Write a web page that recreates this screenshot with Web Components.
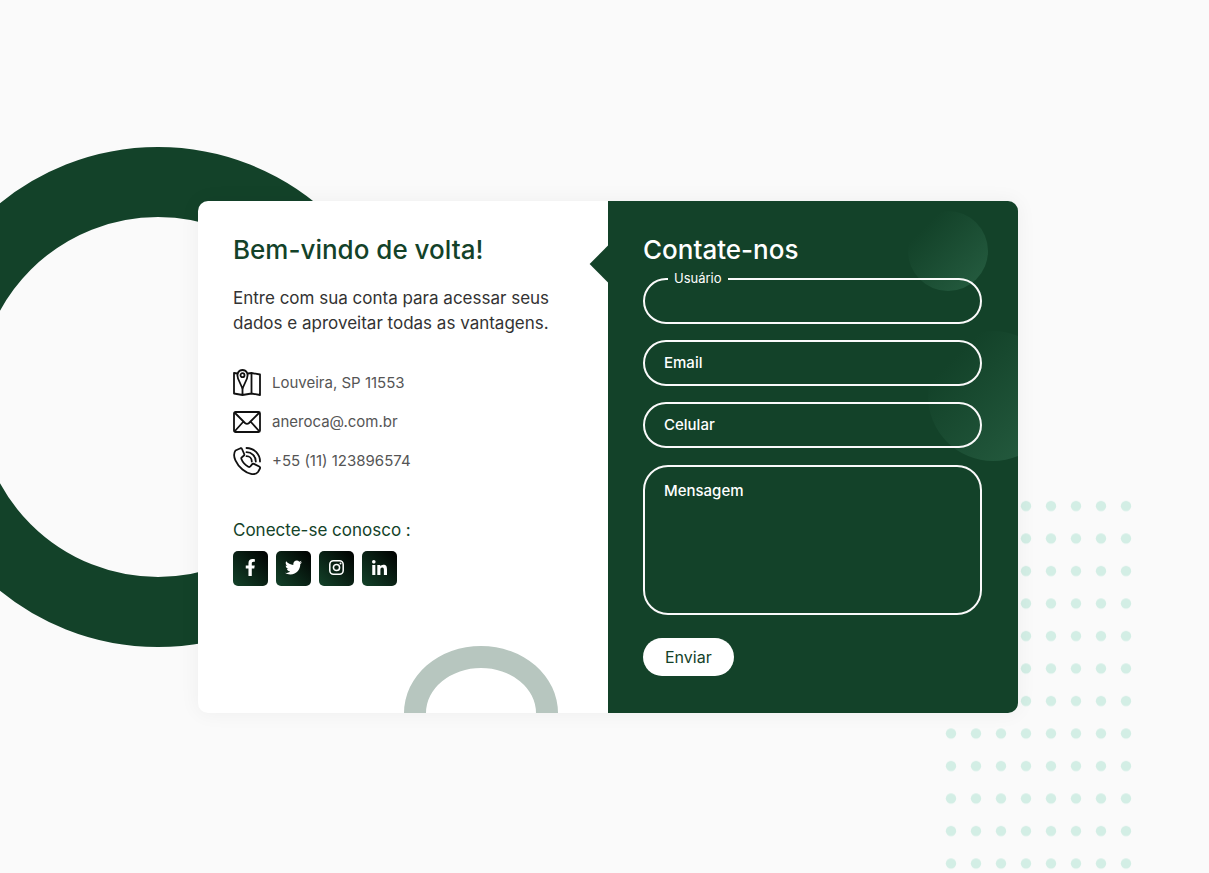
<!DOCTYPE html>
<html lang="pt-BR">
<head>
<meta charset="utf-8">
<meta name="viewport" content="width=device-width, initial-scale=1">
<title>Contate-nos</title>
<style>
  body { margin: 0; font-family: Inter, "Open Sans", sans-serif; background: #fafafa; }
</style>
</head>
<body>
<contact-page>
  <contact-info slot="info">
    <h2 slot="title">Bem-vindo de volta!</h2>
    <span slot="text">Entre com sua conta para acessar seus dados e aproveitar todas as vantagens.</span>
    <info-row icon="map">Louveira, SP 11553</info-row>
    <info-row icon="mail">aneroca@.com.br</info-row>
    <info-row icon="phone">+55 (11) 123896574</info-row>
    <span slot="social-title">Conecte-se conosco :</span>
    <social-link slot="social" icon="facebook" label="Facebook"></social-link>
    <social-link slot="social" icon="twitter" label="Twitter"></social-link>
    <social-link slot="social" icon="instagram" label="Instagram"></social-link>
    <social-link slot="social" icon="linkedin" label="LinkedIn"></social-link>
  </contact-info>
  <contact-form slot="form"></contact-form>
</contact-page>

<script>
const ICONS = {
  map: `<svg viewBox="0 0 28 28" fill="none" stroke="#111" stroke-width="1.8" stroke-linejoin="round" stroke-linecap="round">
    <path d="M4.500 4.500 1 4v20.500l8.500 1.500 9-1.500 8.500 1.500V5.500L18.500 4l-3.500.5M9.500 19.500V26M18.500 4v20.500"/>
    <path d="M9.500 19.500 5 9.500C3 5 5.700 1 9.500 1s6.500 4 4.500 8.500z"/><circle cx="9.500" cy="6.200" r="2"/></svg>`,
  mail: `<svg viewBox="0 0 28 28" fill="none" stroke="#111" stroke-width="1.800" stroke-linejoin="round">
    <rect x="1" y="4" width="26" height="20" rx="1.500"/><path d="m1.500 4.500 10.500 10.500q2 1.700 4 0L26.500 4.500M1.500 23.500l9-10M26.500 23.500l-9-10"/></svg>`,
  phone: `<svg viewBox="0 0 28 28" fill="none" stroke="#111" stroke-width="1.800" stroke-linejoin="round" stroke-linecap="round">
    <path d="M7.500 1.200 2.500 3.500C-1.500 9 4 18 9.500 22.500c5.500 4.500 12 6.500 15.500 2.500l2-3.500q.5-1.200-.8-2l-5.200-2.600q-1.200-.5-2 .5L17.300 19.500q-.8.900-2 .2C11.500 17.500 9.500 15 8.400 12q-.4-1 .5-1.700l1.800-1.500q.9-.7.500-1.800L9 2q-.5-1.100-1.500-.8z"/>
    <path d="M13.500 1C21 1 27 7 27 14.500M13.500 5.200c5.200 0 9.300 4.100 9.300 9.300M13.500 9.200c3 0 5.300 2.300 5.300 5.300"/></svg>`,
  facebook: `<svg viewBox="0 0 320 512"><path fill="#fff" d="M279.140 288l14.220-92.660h-88.910v-60.130c0-25.350 12.420-50.060 52.240-50.060h40.420V6.260S260.430 0 225.360 0c-73.220 0-121.080 44.380-121.080 124.720v70.620H22.890V288h81.390v224h100.170V288z"/></svg>`,
  twitter: `<svg viewBox="0 0 512 512"><path fill="#fff" d="M459.370 151.716c.325 4.548.325 9.097.325 13.645 0 138.720-105.583 298.558-298.558 298.558-59.452 0-114.680-17.219-161.137-47.106 8.447.974 16.568 1.299 25.340 1.299 49.055 0 94.213-16.568 130.274-44.832-46.132-.975-84.792-31.188-98.112-72.772 6.498.974 12.995 1.624 19.818 1.624 9.421 0 18.843-1.300 27.614-3.573-48.081-9.747-84.143-51.980-84.143-102.985v-1.299c13.969 7.797 30.214 12.670 47.431 13.319-28.264-18.843-46.781-51.005-46.781-87.391 0-19.492 5.197-37.360 14.294-52.954 51.655 63.675 129.300 105.258 216.365 109.807-1.624-7.797-2.599-15.918-2.599-24.040 0-57.828 46.782-104.934 104.934-104.934 30.213 0 57.502 12.670 76.670 33.137 23.715-4.548 46.456-13.320 66.599-25.340-7.798 24.366-24.366 44.833-46.132 57.827 21.117-2.273 41.584-8.122 60.426-16.243-14.292 20.791-32.161 39.308-52.628 54.253z"/></svg>`,
  instagram: `<svg viewBox="0 0 448 448"><rect x="24" y="24" width="400" height="400" rx="110" fill="none" stroke="#fff" stroke-width="46"/><circle cx="224" cy="224" r="92" fill="none" stroke="#fff" stroke-width="46"/><circle cx="344" cy="104" r="29" fill="#fff"/></svg>`,
  linkedin: `<svg viewBox="0 32 448 448"><path fill="#fff" d="M100.280 480H7.400V180.900h92.880zM53.790 140.100C24.090 140.100 0 115.500 0 85.800a53.790 53.790 0 0 1 107.580 0c0 29.700-24.100 54.300-53.790 54.300zM447.900 480h-92.680V334.400c0-34.700-.7-79.200-48.290-79.200-48.290 0-55.690 37.700-55.690 76.700V480h-92.780V180.900h89.080v40.800h1.300c12.400-23.500 42.690-48.300 87.880-48.300 94 0 111.280 61.900 111.280 142.300V480z"/></svg>`
};

class BaseElement extends HTMLElement {
  render(html) {
    const template = document.createElement('template');
    template.innerHTML = html;
    this.attachShadow({ mode: 'open' }).append(template.content.cloneNode(true));
  }
}

customElements.define('info-row', class extends BaseElement {
  connectedCallback() {
    this.render(`<style>
      :host { display: flex; align-items: center; gap: 11px; margin: 11px 0; color: #555; font-size: 15px; line-height: 28px; }
      svg { display: block; width: 28px; height: 28px; }
    </style>${ICONS[this.getAttribute('icon')]}<span><slot></slot></span>`);
  }
});

customElements.define('social-link', class extends BaseElement {
  connectedCallback() {
    const icon = this.getAttribute('icon');
    this.render(`<style>
      :host { display: block; }
      a { display: flex; align-items: center; justify-content: center; width: 35px; height: 35px; border-radius: 5px; background: linear-gradient(45deg, #134229, #000); }
      svg { display: block; height: 17px; margin-bottom: 2px; }
      .instagram, .linkedin { height: 15px; }
    </style><a href="#" aria-label="${this.getAttribute('label')}">${ICONS[icon].replace('<svg', `<svg class="${icon}"`)}</a>`);
  }
});

customElements.define('contact-info', class extends BaseElement {
  connectedCallback() {
    this.render(`<style>
      :host { display: block; box-sizing: border-box; position: relative; padding: 31px 35px; overflow: hidden; }
      ::slotted(h2) { margin: 0; color: #134229; font-size: 26px; font-weight: 500; line-height: 36px; }
      p { margin: 18px 0 33px; color: #333; font-size: 17px; line-height: 25px; }
      .social { padding-top: 28px; color: #134229; }
      .social p { margin: 0; color: inherit; line-height: 32px; }
      .links { display: flex; gap: 8px; margin-top: 5px; }
      .ring { position: absolute; box-sizing: border-box; width: 154px; height: 134px; right: 50px; bottom: -67px; border: 22px solid #b7c6bf; border-radius: 50%; }
    </style>
    <slot name="title"></slot>
    <p><slot name="text"></slot></p>
    <slot></slot>
    <div class="social"><p><slot name="social-title"></slot></p><div class="links"><slot name="social"></slot></div></div>
    <div class="ring"></div>`);
  }
});

customElements.define('contact-form', class extends BaseElement {
  connectedCallback() {
    this.render(`<style>
      :host { display: block; position: relative; background: #134229; color: #fff; }
      .art { position: absolute; inset: 0; overflow: hidden; border-radius: 0 10px 10px 0; }
      .art i { position: absolute; border-radius: 50%; background: linear-gradient(135deg, transparent 20%, #3a7a5a80); }
      .small { width: 80px; height: 80px; top: 10px; right: 30px; }
      .large { width: 130px; height: 130px; top: 130px; right: -40px; }
      .arrow { position: absolute; width: 26px; height: 26px; top: 50px; left: -13px; background: #134229; transform: rotate(45deg); }
      form { position: relative; padding: 31px 36px 37px 35px; }
      h2 { margin: 0; font-size: 26px; font-weight: 500; line-height: 36px; }
      .field { position: relative; margin: 16px 0; }
      .field.first { margin-top: 10px; }
      .field.message { margin-top: 17px; }
      input, textarea { display: block; box-sizing: border-box; width: 100%; height: 46px; padding: 10px 19px; border: 2px solid #fafafa; border-radius: 25px; outline: none; background: none; color: #fff; font: 500 15px Inter, sans-serif; resize: none; }
      textarea { height: 150px; }
      label { position: absolute; left: 21px; top: 13px; font-size: 15px; font-weight: 500; line-height: 20px; pointer-events: none; }
      .first label { left: 25px; top: -10px; padding: 0 6px; background: #134229; font-size: 13px; font-weight: 400; }
      .message label { top: 16px; }
      button { display: block; margin-top: 23px; padding: 0 22px; border: 0; border-radius: 19px; background: #fff; color: #134229; font: 16px/38px Inter, sans-serif; cursor: pointer; }
    </style>
    <div class="art"><i class="small"></i><i class="large"></i></div>
    <div class="arrow"></div>
    <form>
      <h2>Contate-nos</h2>
      <div class="field first"><input id="user" type="text"><label for="user">Usuário</label></div>
      <div class="field"><input id="email" type="email"><label for="email">Email</label></div>
      <div class="field"><input id="phone" type="tel"><label for="phone">Celular</label></div>
      <div class="field message"><textarea id="message"></textarea><label for="message">Mensagem</label></div>
      <button type="button">Enviar</button>
    </form>`);
  }
});

customElements.define('contact-page', class extends BaseElement {
  connectedCallback() {
    this.render(`<style>
      :host { display: flex; box-sizing: border-box; position: relative; min-height: 100vh; padding: 32px; align-items: center; justify-content: center; overflow: hidden; background: #fafafa; }
      .circle { position: absolute; box-sizing: border-box; width: 500px; height: 500px; left: calc(50% - 447px); top: calc(50% - 290px); transform: translateX(-50%); border: 70px solid #134229; border-radius: 50%; }
      .dots { position: absolute; right: 71px; bottom: -27px; width: 199px; height: 410px; }
      .card { display: grid; grid-template-columns: 1fr 1fr; position: relative; width: 100%; max-width: 820px; margin-top: 41px; margin-right: -7px; border-radius: 10px; background: #fff; box-shadow: 0 0 20px 1px #0000000c; }
      ::slotted(contact-info) { border-radius: 10px 0 0 10px; }
      ::slotted(contact-form) { border-radius: 0 10px 10px 0; }
    </style>
    <div class="circle"></div>
    <svg class="dots" aria-hidden="true"><defs><pattern id="dot" width="25" height="32.500" patternUnits="userSpaceOnUse"><circle cx="12" cy="16" r="5.200" fill="#d3eee5"/></pattern></defs><rect width="199" height="410" fill="url(#dot)"/></svg>
    <div class="card"><slot name="info"></slot><slot name="form"></slot></div>`);
  }
});
</script>
</body>
</html>
